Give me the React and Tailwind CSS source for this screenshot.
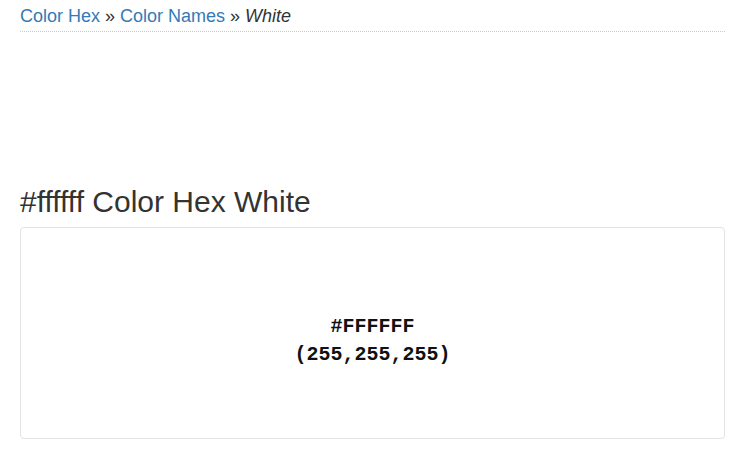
export default function App() {
  return (
    <div className="min-h-[450px] bg-white px-5 font-['Liberation_Sans',Arial,sans-serif] text-[#333]">
      <div className="border-b border-dotted border-[#cccccc] pt-[3px] pb-[2px] text-[18px] leading-[26px]">
        <span className="text-[#337ab7]">Color Hex</span>
        <span> » </span>
        <span className="text-[#337ab7]">Color Names</span>
        <span> » </span>
        <span className="italic">White</span>
      </div>
      <h1 className="mt-[152px] mb-[7px] text-[30px] leading-[36px] font-normal">#ffffff Color Hex White</h1>
      <div className="flex h-[212px] flex-col items-center rounded border border-[#e3e3e3] bg-white pt-[85px] font-['Liberation_Mono','Courier_New',monospace] text-[20px] font-bold leading-[28px] text-[#111]">
        <div>#FFFFFF</div>
        <div>(255,255,255)</div>
      </div>
    </div>
  );
}
